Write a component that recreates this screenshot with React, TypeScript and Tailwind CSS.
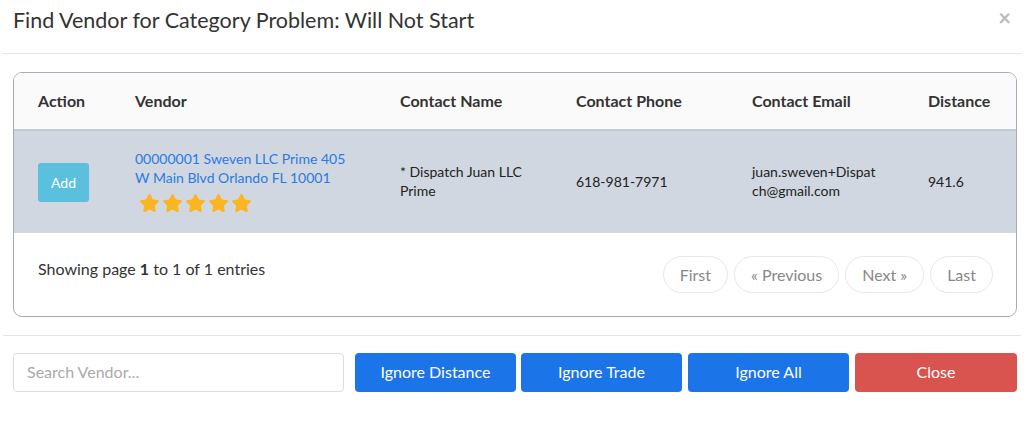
import { Star } from "lucide-react";

const font = { fontFamily: "Lato, 'Noto Sans', sans-serif" };

export default function App() {
  return (
    <div className="w-[1024px] h-[430px] bg-white text-[#333]" style={font}>
      <div className="mx-[3px]">
        <div className="flex items-center justify-between h-[54px] pl-[10px] pr-[4px] border-b border-[#e5e5e5]">
          <h4 className="text-[21.5px] leading-none -mt-[12px]">Find Vendor for Category Problem: Will Not Start</h4>
          <button className="text-[#bbb] text-[22px] font-bold leading-none -mt-[18px] mr-[6px]">×</button>
        </div>

        <div className="pl-[10px] pr-[4px] pt-[18px] pb-[18px] border-b border-[#e5e5e5]">
          <div className="border border-[#a3adba] rounded-[9px] overflow-hidden">
            <table className="w-full table-fixed border-collapse">
              <colgroup>
                <col className="w-[97px]" />
                <col className="w-[265px]" />
                <col className="w-[176px]" />
                <col className="w-[176px]" />
                <col className="w-[176px]" />
                <col />
              </colgroup>
              <thead>
                <tr className="bg-[#fafafa] h-[57px] border-b-2 border-[#c3cad3] text-left text-[16px] font-bold">
                  <th className="pl-6">Action</th>
                  <th className="pl-6">Vendor</th>
                  <th className="pl-6">Contact Name</th>
                  <th className="pl-6">Contact Phone</th>
                  <th className="pl-6">Contact Email</th>
                  <th className="pl-6">Distance</th>
                </tr>
              </thead>
              <tbody>
                <tr className="bg-[#d0d7e0] h-[103px] text-[14px] text-[#222] leading-[19px]">
                  <td className="pl-6">
                    <button className="w-[51px] h-[39px] rounded-[3px] bg-[#5bc0de] text-white text-[14px]">Add</button>
                  </td>
                  <td className="pl-6 pr-6 pb-[2px]">
                    <a className="text-[#2a7ae2] block">00000001 Sweven LLC Prime 405 W Main Blvd Orlando FL 10001</a>
                    <div className="flex gap-[2px] pl-[4px] mt-[6px]">
                      {[0, 1, 2, 3, 4].map((i) => (
                        <Star key={i} size={21} fill="#fbb521" color="#fbb521" strokeWidth={1.5} />
                      ))}
                    </div>
                  </td>
                  <td className="pl-6 pr-6 pb-[2px]">* Dispatch Juan LLC Prime</td>
                  <td className="pl-6 pb-[2px]">618-981-7971</td>
                  <td className="pl-6 pr-[28px] pb-[2px] break-all">juan.sweven+Dispatch@gmail.com</td>
                  <td className="pl-6 pb-[2px]">941.6</td>
                </tr>
              </tbody>
            </table>
            <div className="flex items-center justify-between pl-6 pr-[23px] h-[83px]">
              <p className="text-[16px] -mt-[12px]">
                Showing page <b>1</b> to 1 of 1 entries
              </p>
              <div className="flex gap-[6px] text-[16px] text-[#888]">
                <span className="h-[37px] px-[16px] flex items-center rounded-full border border-[#e8e8e8]">First</span>
                <span className="h-[37px] px-[16px] flex items-center rounded-full border border-[#e8e8e8]">« Previous</span>
                <span className="h-[37px] px-[16px] flex items-center rounded-full border border-[#e8e8e8]">Next »</span>
                <span className="h-[37px] px-[16px] flex items-center rounded-full border border-[#e8e8e8]">Last</span>
              </div>
            </div>
          </div>
        </div>

        <div className="flex pl-[10px] pr-[4px] pt-[17px]">
          <input
            placeholder="Search Vendor..."
            className="w-[331px] shrink-0 h-[39px] mr-[11px] px-[13px] pb-[2px] border border-[#ddd] rounded-[4px] text-[16px] placeholder:text-[#aaa] outline-none"
            style={font}
          />
          <button className="w-[161px] shrink-0 h-[39px] mr-[5px] pb-[2px] rounded-[4px] bg-[#1b74e8] text-white text-[16px]">Ignore Distance</button>
          <button className="w-[161px] shrink-0 h-[39px] mr-[6px] pb-[2px] rounded-[4px] bg-[#1b74e8] text-white text-[16px]">Ignore Trade</button>
          <button className="w-[161px] shrink-0 h-[39px] mr-[6px] pb-[2px] rounded-[4px] bg-[#1b74e8] text-white text-[16px]">Ignore All</button>
          <button className="w-[162px] shrink-0 h-[39px] pb-[2px] rounded-[4px] bg-[#d9534f] text-white text-[16px]">Close</button>
        </div>
      </div>
    </div>
  );
}
